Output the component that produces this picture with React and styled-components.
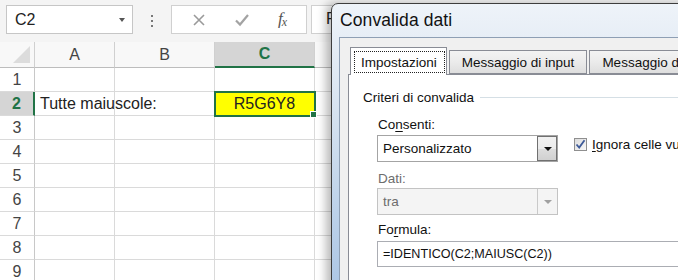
import React from 'react';
import styled, { createGlobalStyle } from 'styled-components';

// excel sheet on the left, "Convalida dati" window over it on the right

const GlobalStyle = createGlobalStyle`
  html, body {
    margin: 0;
    padding: 0;
    background: #ffffff;
  }
  body {
    font-family: "Liberation Sans", Arial, sans-serif;
  }
`;

const GREEN = '#217346';

const Screen = styled.div`
  position: relative;
  width: 678px;
  height: 280px;
  overflow: hidden;
  background: #ffffff;
`;

/* ---------- excel ---------- */

const FormulaBar = styled.div`
  display: flex;
  align-items: flex-start;
  height: 42px;
  padding: 5px 0 0 6px;
  box-sizing: border-box;
  background: #f4f4f4;
`;

const NameBox = styled.div`
  display: flex;
  align-items: center;
  justify-content: space-between;
  width: 127px;
  height: 29px;
  box-sizing: border-box;
  padding: 0 7px 0 8px;
  background: #fff;
  border: 1px solid #c6c6c6;
  font-size: 16px;
  color: #222;
`;

const Caret = styled.span`
  width: 0;
  height: 0;
  border-left: 3.5px solid transparent;
  border-right: 3.5px solid transparent;
  border-top: 4px solid #555;
`;

const Grip = styled.div`
  display: flex;
  flex-direction: column;
  gap: 3px;
  width: 38px;
  align-items: center;
  padding-top: 10px;
  span {
    width: 2px;
    height: 2px;
    background: #777;
  }
`;

const FxBox = styled.div`
  display: flex;
  align-items: center;
  justify-content: space-around;
  width: 136px;
  height: 29px;
  box-sizing: border-box;
  padding: 0 6px;
  background: #fff;
  border: 1px solid #d0d0d0;
`;

const FxLabel = styled.span`
  font-family: "Liberation Serif", "Times New Roman", serif;
  font-style: italic;
  font-size: 17px;
  color: #555;
  letter-spacing: -1px;
  sub {
    font-size: 12px;
    vertical-align: -2px;
  }
`;

const FormulaInput = styled.div`
  flex: 1;
  margin-left: 4px;
  height: 29px;
  box-sizing: border-box;
  padding: 4px 0 0 14px;
  background: #fff;
  border: 1px solid #d0d0d0;
  font-size: 16px;
  color: #222;
`;

const Sheet = styled.div`
  display: grid;
  grid-template-columns: 35px 80px 100px 100px 100px 1fr;
  grid-template-rows: 26px repeat(9, 24px);
  font-size: 16px;
  color: #222;
`;

const Cell = styled.div`
  box-sizing: border-box;
  border-right: 1px solid #dadada;
  border-bottom: 1px solid #dadada;
  display: flex;
  align-items: center;
  padding-left: 5px;
  white-space: nowrap;
  overflow: visible;
`;

const ColHead = styled.div`
  box-sizing: border-box;
  display: flex;
  align-items: center;
  justify-content: center;
  background: ${p => (p.$active ? '#d5d5d5' : '#f8f8f8')};
  color: ${p => (p.$active ? GREEN : '#444')};
  font-weight: ${p => (p.$active ? 700 : 400)};
  border-right: 1px solid #d0d0d0;
  border-bottom: ${p => (p.$active ? `2px solid ${GREEN}` : '1px solid #bdbdbd')};
`;

const Corner = styled(ColHead)`
  position: relative;
  &::after {
    content: '';
    position: absolute;
    right: 4px;
    bottom: 4px;
    width: 0;
    height: 0;
    border-left: 17px solid transparent;
    border-bottom: 17px solid #dcdcdc;
  }
`;

const RowHead = styled.div`
  box-sizing: border-box;
  display: flex;
  align-items: center;
  justify-content: center;
  background: ${p => (p.$active ? '#d5d5d5' : '#fff')};
  color: ${p => (p.$active ? GREEN : '#444')};
  font-weight: ${p => (p.$active ? 700 : 400)};
  border-bottom: 1px solid #dadada;
  border-right: ${p => (p.$active ? `2px solid ${GREEN}` : '1px solid #c8c8c8')};
`;

const ActiveCell = styled(Cell)`
  position: relative;
  justify-content: center;
  padding: 0;
  background: #ffff00;
  outline: 2px solid ${GREEN};
  outline-offset: -1px;
  z-index: 1;
  &::after {
    content: '';
    position: absolute;
    right: -3px;
    bottom: -3px;
    width: 5px;
    height: 5px;
    background: ${GREEN};
    border: 1px solid #fff;
  }
`;

/* ---------- dialog ---------- */

const Window = styled.div`
  position: absolute;
  z-index: 5;
  left: 331px;
  top: 3px;
  width: 420px;
  height: 320px;
  box-sizing: border-box;
  border: 1px solid #3d3d3d;
  border-radius: 7px 7px 0 0;
  background: linear-gradient(180deg, #eef3f9 0%, #dde7f2 25%, #b9cfe8 70%, #a6c2e3 100%);
  box-shadow: -5px 0 10px rgba(0, 0, 0, 0.28);
  padding: 0 0 0 7px;
  display: flex;
  flex-direction: column;
`;

const TitleBar = styled.div`
  height: 33px;
  display: flex;
  align-items: center;
  padding-left: 1px;
  font-size: 17.5px;
  color: #111;
  letter-spacing: 0.1px;
`;

const Client = styled.div`
  flex: 1;
  background: #f0f0f0;
  border: 1px solid #8e9fb4;
  padding: 8px 0 0 8px;
`;

const TabStrip = styled.div`
  display: flex;
  align-items: flex-end;
  height: 28px;
  padding-left: 2px;
  gap: 2px;
`;

const Tab = styled.div`
  box-sizing: border-box;
  display: flex;
  align-items: center;
  height: ${p => (p.$active ? '28px' : '24px')};
  padding: ${p => (p.$active ? '3px 1px 2px 3px' : '0 12px')};
  margin-bottom: ${p => (p.$active ? '-1px' : '0')};
  background: ${p => (p.$active ? '#fff' : 'linear-gradient(180deg, #f3f3f3 0%, #ebebeb 50%, #dedede 100%)')};
  border: 1px solid #898c95;
  border-bottom: ${p => (p.$active ? 'none' : '1px solid #898c95')};
  font-size: 13.5px;
  color: #111;
  white-space: nowrap;
  position: relative;
  z-index: ${p => (p.$active ? 1 : 0)};
`;

const Focus = styled.span`
  display: flex;
  align-items: center;
  height: 100%;
  padding: 0 7px 0 6px;
  border: 1px dotted #222;
  box-sizing: border-box;
`;

const Panel = styled.div`
  background: #fff;
  border-top: 1px solid #898c95;
  border-left: 1px solid #898c95;
  height: 100%;
  padding: 13px 0 0 14px;
  box-sizing: border-box;
  font-size: 13.5px;
  color: #111;
`;

const GroupTitle = styled.div`
  display: flex;
  align-items: center;
  gap: 6px;
  height: 18px;
  &::after {
    content: '';
    flex: 1;
    height: 1px;
    background: #d5dfe5;
  }
`;

const Fields = styled.div`
  display: flex;
  flex-direction: column;
  padding-left: 14px;
`;

const Label = styled.div`
  height: 18px;
  line-height: 18px;
  padding-left: 1px;
  margin-top: ${p => p.$mt || 0}px;
  color: ${p => (p.$disabled ? '#6d6d6d' : '#111')};
`;

const Row = styled.div`
  display: flex;
  align-items: flex-start;
  gap: 16px;
  margin-top: ${p => p.$mt || 0}px;
`;

const Combo = styled.div`
  display: flex;
  align-items: stretch;
  width: 181px;
  height: 27px;
  box-sizing: border-box;
  border: 1px solid ${p => (p.$disabled ? '#c3c3c3' : '#a4a4a4')};
  background: ${p => (p.$disabled ? '#f4f4f4' : '#fff')};
  color: ${p => (p.$disabled ? '#6d6d6d' : '#111')};
`;

const ComboText = styled.div`
  flex: 1;
  display: flex;
  align-items: center;
  padding-left: 5px;
`;

const DropButton = styled.div`
  width: 20px;
  box-sizing: border-box;
  display: flex;
  align-items: center;
  justify-content: center;
  border-left: 1px solid ${p => (p.$disabled ? '#c9c9c9' : '#707070')};
  background: ${p => (p.$disabled ? '#f4f4f4' : 'linear-gradient(180deg, #f2f2f2 0%, #ebebeb 50%, #dddddd 51%, #cfcfcf 100%)')};
  outline: ${p => (p.$disabled ? 'none' : '1px solid #707070')};
  outline-offset: -1px;
  &::before {
    content: '';
    width: 0;
    height: 0;
    border-left: 4px solid transparent;
    border-right: 4px solid transparent;
    border-top: 4px solid ${p => (p.$disabled ? '#a0a0a0' : '#111')};
  }
`;

const Check = styled.label`
  display: flex;
  align-items: center;
  gap: 5px;
  margin-top: 2px;
  white-space: nowrap;
`;

const Box = styled.span`
  width: 13px;
  height: 13px;
  box-sizing: border-box;
  border: 1px solid #8f8f8f;
  background: linear-gradient(135deg, #dcdcdc 0%, #f8f8f8 100%);
  display: flex;
  align-items: center;
  justify-content: center;
`;

const Input = styled.div`
  width: 330px;
  height: 26px;
  box-sizing: border-box;
  border: 1px solid #abadb3;
  display: flex;
  align-items: center;
  padding-left: 5px;
  margin-top: 2px;
  font-size: 12.6px;
`;

const U = styled.span`
  text-decoration: underline;
  text-underline-offset: 2px;
`;

const XIcon = () => (
  <svg width="14" height="14" viewBox="0 0 14 14">
    <path d="M2 2 L12 12 M12 2 L2 12" stroke="#9a9a9a" strokeWidth="1.6" fill="none" />
  </svg>
);

const CheckIcon = () => (
  <svg width="16" height="14" viewBox="0 0 16 14">
    <path d="M2 7.5 L6 11.5 L14 2" stroke="#a3a3a3" strokeWidth="2.2" fill="none" />
  </svg>
);

const TickIcon = () => (
  <svg width="11" height="11" viewBox="0 0 11 11">
    <path d="M1.5 5.5 L4.2 8.5 L9.5 1.2" stroke="#3d5a98" strokeWidth="1.8" fill="none" />
  </svg>
);

const columns = ['A', 'B', 'C', 'D'];

export default function App() {
  const rows = [1, 2, 3, 4, 5, 6, 7, 8, 9];
  return (
    <Screen>
      <GlobalStyle />
      <FormulaBar>
        <NameBox>
          <span>C2</span>
          <Caret />
        </NameBox>
        <Grip>
          <span />
          <span />
          <span />
        </Grip>
        <FxBox>
          <XIcon />
          <CheckIcon />
          <FxLabel>
            f<sub>x</sub>
          </FxLabel>
        </FxBox>
        <FormulaInput>R</FormulaInput>
      </FormulaBar>

      <Sheet>
        <Corner />
        {columns.map(c => (
          <ColHead key={c} $active={c === 'C'}>
            {c}
          </ColHead>
        ))}
        <ColHead />
        {rows.map(r => (
          <React.Fragment key={r}>
            <RowHead $active={r === 2}>{r}</RowHead>
            <Cell>{r === 2 ? 'Tutte maiuscole:' : ''}</Cell>
            <Cell />
            {r === 2 ? <ActiveCell>R5G6Y8</ActiveCell> : <Cell />}
            <Cell />
            <Cell />
          </React.Fragment>
        ))}
      </Sheet>

      <Window>
        <TitleBar>Convalida dati</TitleBar>
        <Client>
          <TabStrip>
            <Tab $active>
              <Focus>Impostazioni</Focus>
            </Tab>
            <Tab>Messaggio di input</Tab>
            <Tab>Messaggio di errore</Tab>
          </TabStrip>
          <Panel>
            <GroupTitle>Criteri di convalida</GroupTitle>
            <Fields>
              <Label $mt={10}>
                Co<U>n</U>senti:
              </Label>
              <Row $mt={1}>
                <Combo>
                  <ComboText>Personalizzato</ComboText>
                  <DropButton />
                </Combo>
                <Check>
                  <Box>
                    <TickIcon />
                  </Box>
                  <span>
                    <U>I</U>gnora celle vuote
                  </span>
                </Check>
              </Row>
              <Label $mt={8} $disabled>
                Dati:
              </Label>
              <Row>
                <Combo $disabled>
                  <ComboText>tra</ComboText>
                  <DropButton $disabled />
                </Combo>
              </Row>
              <Label $mt={6}>
                Fo<U>r</U>mula:
              </Label>
              <Input>=IDENTICO(C2;MAIUSC(C2))</Input>
            </Fields>
          </Panel>
        </Client>
      </Window>
    </Screen>
  );
}
